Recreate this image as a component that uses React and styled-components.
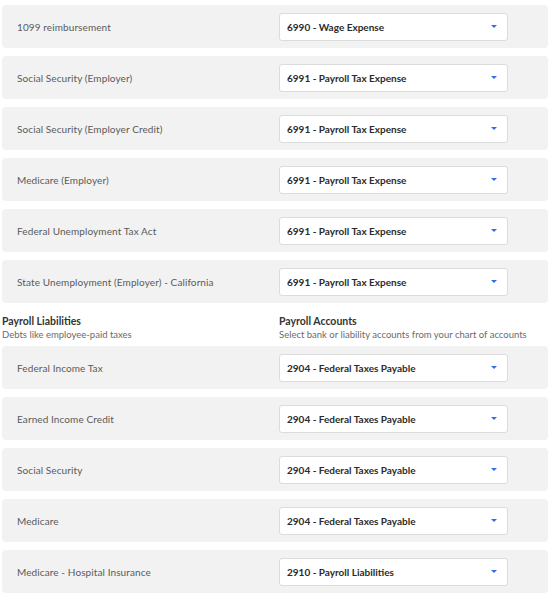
import React from 'react';
import styled, { createGlobalStyle } from 'styled-components';

const GlobalStyle = createGlobalStyle`
  html, body {
    margin: 0;
    padding: 0;
    background: #ffffff;
  }
  body {
    font-family: Lato, "Open Sans", "Liberation Sans", sans-serif;
    -webkit-font-smoothing: antialiased;
  }
`;

const Page = styled.div`
  width: 546px;
  padding: 5px 2px 0;
  display: flex;
  flex-direction: column;
  gap: 8px;
`;

const Row = styled.div`
  height: 43px;
  display: flex;
  align-items: center;
  padding: 0 40px 0 15px;
  background: #f2f2f2;
  border-radius: 4px;
`;

const RowLabel = styled.div`
  flex: 1;
  font-size: 10px;
  color: #5a5a5a;
  letter-spacing: 0.1px;
`;

const Select = styled.div`
  width: 229px;
  height: 28px;
  box-sizing: border-box;
  display: flex;
  align-items: center;
  justify-content: space-between;
  padding: 0 10px 0 7px;
  background: #ffffff;
  border: 1px solid #dcdcdc;
  border-radius: 3px;
  font-size: 10px;
  font-weight: 700;
  color: #2b2b2b;
`;

const Caret = styled.span`
  width: 0;
  height: 0;
  border-left: 3.5px solid transparent;
  border-right: 3.5px solid transparent;
  border-top: 3.5px solid #2f6fe0;
`;

const SectionHeader = styled.div`
  display: grid;
  grid-template-columns: 277px 1fr;
  padding: 3px 0 0;
  margin-bottom: -4px;
`;

const HeaderCol = styled.div`
  display: flex;
  flex-direction: column;
`;

const HeaderTitle = styled.div`
  font-size: 10.5px;
  font-weight: 700;
  color: #333333;
  line-height: 14px;
`;

const HeaderSub = styled.div`
  font-size: 9.5px;
  color: #6b6b6b;
  line-height: 14px;
`;

const expenseRows = [
  ['1099 reimbursement', '6990 - Wage Expense'],
  ['Social Security (Employer)', '6991 - Payroll Tax Expense'],
  ['Social Security (Employer Credit)', '6991 - Payroll Tax Expense'],
  ['Medicare (Employer)', '6991 - Payroll Tax Expense'],
  ['Federal Unemployment Tax Act', '6991 - Payroll Tax Expense'],
  ['State Unemployment (Employer) - California', '6991 - Payroll Tax Expense'],
];

const liabilityRows = [
  ['Federal Income Tax', '2904 - Federal Taxes Payable'],
  ['Earned Income Credit', '2904 - Federal Taxes Payable'],
  ['Social Security', '2904 - Federal Taxes Payable'],
  ['Medicare', '2904 - Federal Taxes Payable'],
  ['Medicare - Hospital Insurance', '2910 - Payroll Liabilities'],
];

const AccountRow = ({ label, account }) => (
  <Row>
    <RowLabel>{label}</RowLabel>
    <Select>
      <span>{account}</span>
      <Caret />
    </Select>
  </Row>
);

export default function App() {
  return (
    <>
      <GlobalStyle />
      <Page>
        {expenseRows.map(([label, account]) => (
          <AccountRow key={label} label={label} account={account} />
        ))}
        <SectionHeader>
          <HeaderCol>
            <HeaderTitle>Payroll Liabilities</HeaderTitle>
            <HeaderSub>Debts like employee-paid taxes</HeaderSub>
          </HeaderCol>
          <HeaderCol>
            <HeaderTitle>Payroll Accounts</HeaderTitle>
            <HeaderSub>Select bank or liability accounts from your chart of accounts</HeaderSub>
          </HeaderCol>
        </SectionHeader>
        {liabilityRows.map(([label, account]) => (
          <AccountRow key={label} label={label} account={account} />
        ))}
      </Page>
    </>
  );
}
